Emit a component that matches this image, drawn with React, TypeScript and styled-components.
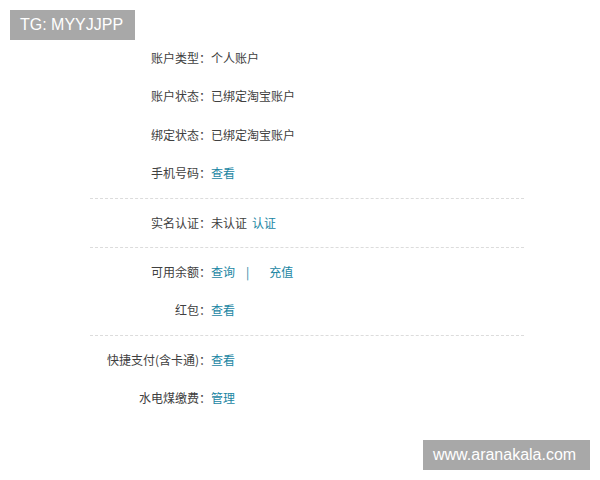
import React from 'react';
import styled, { createGlobalStyle } from 'styled-components';

const GlobalStyle = createGlobalStyle`
  html, body {
    margin: 0;
    padding: 0;
    background: #fff;
  }
  body {
    width: 600px;
    height: 480px;
    overflow: hidden;
    font-family: "Noto Sans CJK SC", "Liberation Sans", sans-serif;
    font-size: 12px;
    color: #404040;
  }
`;

const Page = styled.div`
  position: relative;
  width: 600px;
  height: 480px;
  padding-top: 39px;
  box-sizing: border-box;
`;

const Panel = styled.div`
  margin-left: 90px;
  width: 434px;
`;

const Group = styled.div<{ $last?: boolean }>`
  padding: 5px 0;
  border-bottom: ${(p) => (p.$last ? 'none' : '1px dashed #dcdcdc')};
  &:first-child {
    padding-top: 0;
    padding-bottom: 5px;
  }
`;

const Row = styled.div`
  display: flex;
  height: 38.4px;
  line-height: 38.4px;
  white-space: nowrap;
`;

const Label = styled.span`
  width: 121px;
  text-align: right;
  flex-shrink: 0;
`;

const Value = styled.span`
  display: flex;
  align-items: center;
`;

const Link = styled.a<{ $gap?: number }>`
  color: #1a86a3;
  text-decoration: none;
  cursor: pointer;
  margin-left: ${(p) => p.$gap ?? 0}px;
`;

const Sep = styled.span`
  color: #1a86a3;
  margin: 0 20px 0 11px;
`;

const Badge = styled.div`
  position: absolute;
  background: #a8a8a8;
  color: #fff;
  font-family: "Liberation Sans", Arial, sans-serif;
  font-size: 16px;
  height: 30px;
  line-height: 30px;
  padding: 0 10px;
  box-sizing: border-box;
`;

const TopBadge = styled(Badge)`
  left: 10px;
  top: 10px;
  width: 125px;
`;

const BottomBadge = styled(Badge)`
  left: 423px;
  top: 440px;
  width: 167px;
`;

export default function App() {
  return (
    <>
      <GlobalStyle />
      <Page>
        <TopBadge>TG: MYYJJPP</TopBadge>
        <Panel>
          <Group>
            <Row>
              <Label>账户类型：</Label>
              <Value>个人账户</Value>
            </Row>
            <Row>
              <Label>账户状态：</Label>
              <Value>已绑定淘宝账户</Value>
            </Row>
            <Row>
              <Label>绑定状态：</Label>
              <Value>已绑定淘宝账户</Value>
            </Row>
            <Row>
              <Label>手机号码：</Label>
              <Value>
                <Link>查看</Link>
              </Value>
            </Row>
          </Group>
          <Group>
            <Row>
              <Label>实名认证：</Label>
              <Value>
                未认证<Link $gap={5}>认证</Link>
              </Value>
            </Row>
          </Group>
          <Group>
            <Row>
              <Label>可用余额：</Label>
              <Value>
                <Link>查询</Link>
                <Sep>|</Sep>
                <Link>充值</Link>
              </Value>
            </Row>
            <Row>
              <Label>红包：</Label>
              <Value>
                <Link>查看</Link>
              </Value>
            </Row>
          </Group>
          <Group $last>
            <Row>
              <Label>快捷支付(含卡通)：</Label>
              <Value>
                <Link>查看</Link>
              </Value>
            </Row>
            <Row>
              <Label>水电煤缴费：</Label>
              <Value>
                <Link>管理</Link>
              </Value>
            </Row>
          </Group>
        </Panel>
        <BottomBadge>www.aranakala.com</BottomBadge>
      </Page>
    </>
  );
}
